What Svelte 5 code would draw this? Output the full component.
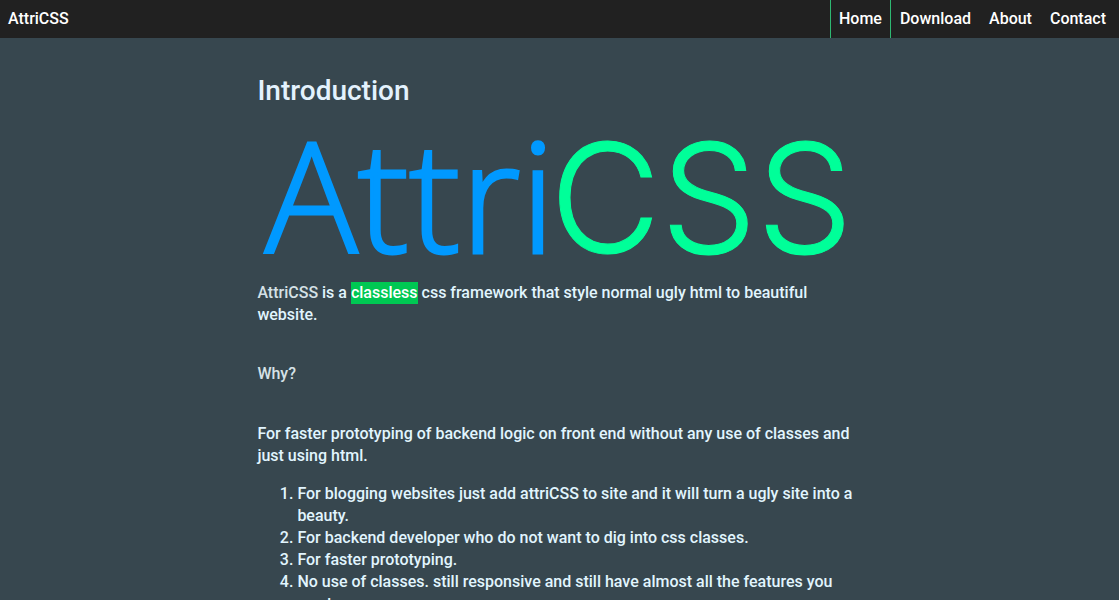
<script>
  const links = ['Home', 'Download', 'About', 'Contact'];
  const current = 'Home';
  const reasons = [
    'For blogging websites just add attriCSS to site and it will turn a ugly site into a beauty.',
    'For backend developer who do not want to dig into css classes.',
    'For faster prototyping.',
    'No use of classes. still responsive and still have almost all the features you want.'
  ];
</script>

<header>
  <a class="brand" href="#home">AttriCSS</a>
  <nav>
    {#each links as link}
      <a class:active={link === current} href="#{link.toLowerCase()}">{link}</a>
    {/each}
  </nav>
</header>

<main>
  <h1>Introduction</h1>
  <svg class="logo" viewBox="0 0 604 128" role="img" aria-label="AttriCSS">
    <text class="attri" x="8" y="115" fill="#0099ff">Attri</text>
    <text class="css" x="293" y="115" fill="#00ff99">CSS</text>
  </svg>
  <p><b>AttriCSS</b> is a <mark>classless</mark> css framework that style normal ugly html to beautiful website.</p>
  <h2>Why?</h2>
  <p>For faster prototyping of backend logic on front end without any use of classes and just using html.</p>
  <ol>
    {#each reasons as reason}
      <li>{reason}</li>
    {/each}
  </ol>
</main>

<style>
  :global(html) {
    scrollbar-width: none;
  }
  :global(body) {
    background: #37474f;
    color: #e1f5fe;
    font: 500 16px/22px Roboto, sans-serif;
  }
  header {
    display: flex;
    justify-content: space-between;
    background: #212121;
    padding-right: 4px;
  }
  header a {
    padding: 8px;
    color: #fff;
    text-decoration: none;
  }
  nav {
    display: flex;
  }
  nav a {
    padding: 8px 9px;
  }
  nav .active {
    padding: 8px;
    border: 0 solid #2eb872;
    border-width: 0 1px;
  }
  main {
    width: 54%;
    margin: 0 auto;
  }
  h1 {
    margin: 34px 0 28px;
    font-size: 28px;
    line-height: 38px;
    font-weight: 500;
    color: #e3f2fd;
  }
  .logo {
    display: block;
    width: 100%;
    margin-bottom: 10px;
  }
  .attri {
    font-family: "Open Sans", sans-serif;
    font-size: 154px;
    font-weight: 300;
    stroke: #0099ff;
    stroke-width: 3px;
  }
  .css {
    font-family: Inter, sans-serif;
    font-size: 152px;
    font-weight: 300;
    stroke: #00ff99;
    stroke-width: 1px;
  }
  p {
    margin: 16px 0;
  }
  b {
    font-weight: 500;
    color: #d5e1e6;
  }
  mark {
    display: inline-block;
    background: #00c853;
    color: #fff;
  }
  h2 {
    margin: 37px 0 38px;
    font-size: 16px;
    line-height: 22px;
    font-weight: 500;
    color: #d5e1e6;
  }
  ol {
    margin: 16px 0;
    padding-left: 40px;
  }
</style>
